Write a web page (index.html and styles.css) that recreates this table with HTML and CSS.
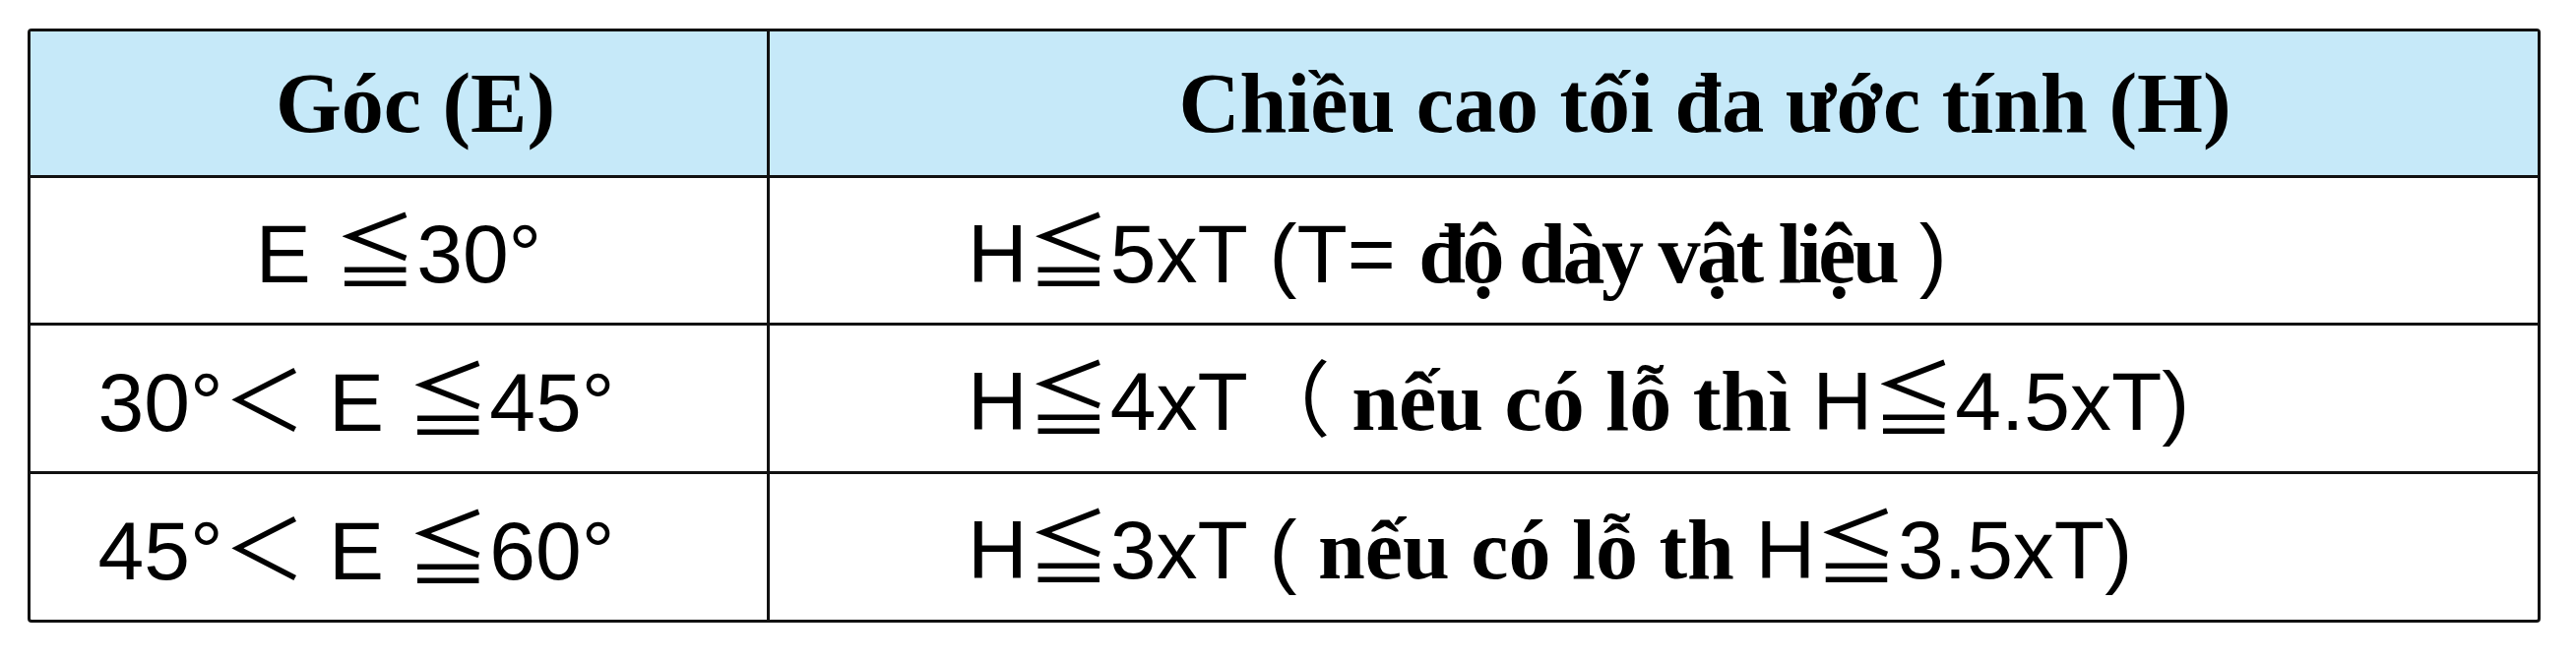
FILE: index.html
```html
<!DOCTYPE html>
<html lang="vi">
<head>
<meta charset="utf-8">
<title>Chiều cao tối đa ước tính</title>
<link rel="stylesheet" href="styles.css">
</head>
<body>
<table class="limits">
  <thead>
    <tr class="row-head">
      <th class="col-angle head-angle">Góc (E)</th>
      <th class="col-height head-height">Chiều cao tối đa ước tính (H)</th>
    </tr>
  </thead>
  <tbody>
    <tr class="row-1">
      <td class="col-angle"><span class="sans">E <span class="cjk">≦</span>30°</span></td>
      <td class="col-height"><span class="sans">H<span class="cjk">≦</span>5xT (T= </span><span class="serif tight">độ dày vật liệu</span><span class="sans"> )</span></td>
    </tr>
    <tr class="row-2">
      <td class="col-angle range"><span class="sans">30°<span class="cjk">＜</span> E <span class="cjk">≦</span>45°</span></td>
      <td class="col-height"><span class="sans">H<span class="cjk">≦</span>4xT<span class="cjk">（</span></span><span class="serif"> nếu có lỗ thì </span><span class="sans">H<span class="cjk">≦</span>4.5xT)</span></td>
    </tr>
    <tr class="row-3">
      <td class="col-angle range"><span class="sans">45°<span class="cjk">＜</span> E <span class="cjk">≦</span>60°</span></td>
      <td class="col-height"><span class="sans">H<span class="cjk">≦</span>3xT (</span><span class="serif"> nếu có lỗ th </span><span class="sans">H<span class="cjk">≦</span>3.5xT)</span></td>
    </tr>
  </tbody>
</table>
</body>
</html>
```
FILE: styles.css
```css
html, body {
  margin: 0;
  padding: 0;
  background: #ffffff;
}

body {
  padding: 29px 0 0 28px;
}

.limits {
  width: 2553px;
  table-layout: fixed;
  border-collapse: separate;
  border-spacing: 0;
  border: 3px solid #111111;
  border-radius: 4px;
  color: #000;
}

.limits th,
.limits td {
  box-sizing: border-box;
  padding: 0;
  vertical-align: middle;
  line-height: 1;
  white-space: nowrap;
  border-right: 3px solid #111111;
  border-bottom: 3px solid #111111;
}

.limits th:last-child,
.limits td:last-child {
  border-right: none;
}

.limits tbody tr:last-child td {
  border-bottom: none;
}

.col-angle {
  width: 751px;
  text-align: center;
}

.col-height {
  text-align: left;
  padding-left: 201px !important;
}

.row-head { height: 149px; }
.row-1 { height: 150px; }
.row-2 { height: 151px; }
.row-3 { height: 148px; }

.limits th {
  background: #c6e9f9;
  font-family: "Liberation Serif", "Times New Roman", serif;
  font-weight: 700;
  font-size: 86px;
}

.limits th.head-angle {
  padding-left: 34px;
}

.limits th.head-height {
  text-align: center;
  padding-left: 104px !important;
}

.range {
  padding-right: 86px !important;
}

.sans {
  font-family: "Liberation Sans", Arial, "Noto Sans CJK JP", sans-serif;
  font-size: 84px;
  font-weight: 400;
}

.serif {
  font-family: "Liberation Serif", "Times New Roman", serif;
  font-size: 86px;
  font-weight: 700;
}

.tight {
  letter-spacing: -3.5px;
}

.cjk {
  font-family: "Noto Sans CJK JP", sans-serif;
  font-weight: 400;
}
```
